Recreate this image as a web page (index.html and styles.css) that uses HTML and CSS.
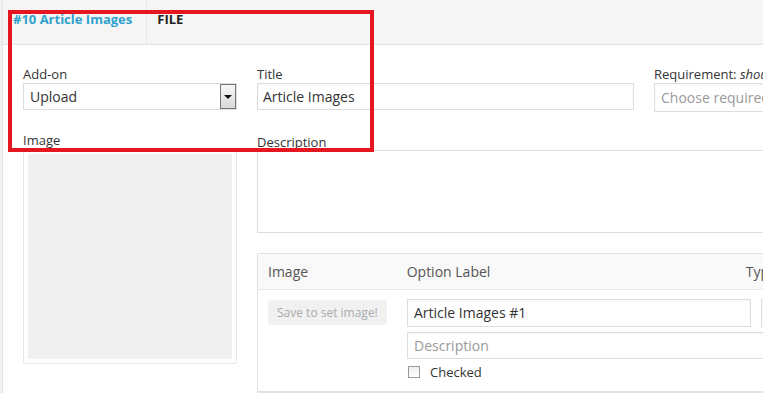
FILE: index.html
```html
<!DOCTYPE html>
<html>
<head>
<meta charset="utf-8">
<link rel="stylesheet" href="styles.css">
</head>
<body>
<div class="panel">
  <div class="tabs">
    <div class="tab tab-active">#10 Article Images</div>
    <div class="tab">FILE</div>
  </div>
  <div class="content">
    <div class="row-top">
      <div class="field f-addon">
        <div class="label">Add-on</div>
        <div class="select">
          <span class="select-text">Upload</span>
          <span class="select-btn"><span class="tri"></span></span>
        </div>
      </div>
      <div class="field f-title">
        <div class="label">Title</div>
        <div class="input">Article Images</div>
      </div>
      <div class="field f-req">
        <div class="label">Requirement: <em>should</em></div>
        <div class="input input-req placeholder">Choose required</div>
      </div>
    </div>
    <div class="row-main">
      <div class="col-left">
        <div class="label label2">Image</div>
        <div class="imgbox"><div class="imgbox-inner"></div></div>
      </div>
      <div class="col-right">
        <div class="label label3">Description</div>
        <div class="textarea"></div>
        <div class="opts">
          <div class="opts-head">
            <div class="c1">Image</div>
            <div class="c2">Option Label</div>
            <div class="c3">Type</div>
          </div>
          <div class="opts-row">
            <div class="c1"><span class="btn">Save to set image!</span></div>
            <div class="c2">
              <div class="line">
                <div class="input opt-input">Article Images #1</div>
                <div class="input opt-type"></div>
              </div>
              <div class="input opt-desc placeholder">Description</div>
              <label class="check"><span class="box"></span>Checked</label>
            </div>
          </div>
        </div>
      </div>
    </div>
  </div>
</div>
<div class="annot"></div>
</body>
</html>
```
FILE: styles.css
```css
html, body {
  margin: 0;
  padding: 0;
  background: #f1f1f1;
  overflow: hidden;
}
body {
  font-family: "Open Sans", "DejaVu Sans", sans-serif;
  font-size: 13px;
  color: #333;
  width: 763px;
  height: 393px;
  position: relative;
}
.panel {
  margin-left: 2px;
  border-left: 1px solid #e2e2e2;
  background: #fff;
  height: 393px;
  overflow: hidden;
}
.tabs {
  display: flex;
  height: 44px;
  background: #f5f5f5;
  border-bottom: 1px solid #e4e4e4;
}
.tab {
  font-weight: 700;
  font-size: 13px;
  line-height: 18px;
  padding: 10px 10px 0 10px;
  color: #222;
}
.tab-active {
  color: #2ea2cc;
  border-right: 1px solid #e8e8e8;
  padding-right: 14px;
}
.content {
  padding: 20px 0 0 20px;
}
.row-top {
  display: flex;
  gap: 20px;
}
.label {
  line-height: 18px;
  color: #333;
  white-space: nowrap;
}
.label em { font-style: italic; }
.f-addon { width: 214px; flex: none; }
.f-title { width: 377px; flex: none; }
.f-req { flex: none; width: 200px; }
.select {
  display: flex;
  align-items: center;
  height: 27px;
  box-sizing: border-box;
  border: 1px solid #ddd;
  position: relative;
}
.select-text {
  flex: 1;
  padding-left: 6px;
  font-size: 14px;
  color: #333;
}
.select-btn {
  width: 16px;
  height: 25px;
  box-sizing: border-box;
  border: 1px solid #777;
  background: linear-gradient(#f8f8f8, #d8d8d8);
  display: flex;
  align-items: center;
  justify-content: center;
}
.tri {
  width: 0;
  height: 0;
  border-left: 4px solid transparent;
  border-right: 4px solid transparent;
  border-top: 4px solid #111;
}
.input {
  height: 27px;
  box-sizing: border-box;
  border: 1px solid #ddd;
  box-shadow: inset 0 1px 2px rgba(0,0,0,0.04);
  font-size: 14px;
  line-height: 25px;
  padding-left: 5px;
  color: #333;
  white-space: nowrap;
  overflow: hidden;
}
.input-req { height: 29px; line-height: 27px; padding-left: 6px; }
.placeholder { color: #9a9a9a; }
.row-main {
  display: flex;
  gap: 20px;
  margin-top: 20px;
}
.col-left { width: 214px; flex: none; }
.label2 { line-height: 16px; }
.imgbox {
  width: 214px;
  height: 216px;
  box-sizing: border-box;
  border: 1px solid #e6e6e6;
  border-radius: 2px;
  padding: 5px 4px 4px 4px;
}
.imgbox-inner {
  background: #f0f0f0;
  height: 100%;
}
.col-right { flex: none; width: 520px; margin-top: 2px; }
.label3 { line-height: 16px; }
.textarea {
  height: 83px;
  box-sizing: border-box;
  border: 1px solid #ddd;
}
.opts {
  margin-top: 20px;
  border: 1px solid #e1e1e1;
  border-right: none;
}
.opts-head {
  display: flex;
  height: 35px;
  align-items: center;
  background: #f9f9f9;
  border-bottom: 1px solid #e8e8e8;
  color: #555;
  font-size: 14px;
}
.opts-head .c1 { width: 149px; padding-left: 10px; box-sizing: border-box; }
.opts-head .c2 { width: 340px; }
.opts-head .c3 { flex: 1; }
.opts-row {
  display: flex;
  height: 102px;
  box-sizing: border-box;
  padding-top: 9px;
  border-bottom: 1px solid #e1e1e1;
}
.opts-row .c1 { width: 149px; padding-left: 10px; box-sizing: border-box; padding-top: 1px; }
.btn {
  display: inline-block;
  background: #f1f1f1;
  color: #aaa;
  font-size: 12px;
  line-height: 25px;
  height: 25px;
  padding: 0 9px;
  border-radius: 3px;
}
.opts-row .c2 { flex: 1; }
.line { display: flex; gap: 10px; }
.opt-input { width: 344px; height: 28px; line-height: 26px; padding-left: 6px; flex: none; }
.opt-type { flex: 1; height: 28px; }
.opt-desc { margin-top: 5px; height: 27px; padding-left: 6px; }
.check {
  display: flex;
  align-items: center;
  margin-top: 5px;
  font-size: 13px;
  color: #333;
  line-height: 16px;
}
.box {
  width: 12px;
  height: 12px;
  box-sizing: border-box;
  border: 1px solid #9a9a9a;
  background: linear-gradient(#eee, #fff);
  margin: 0 10px 0 1px;
}
.annot {
  position: absolute;
  left: 8px;
  top: 10px;
  width: 366px;
  height: 142px;
  box-sizing: border-box;
  border: 4px solid #e4161f;
  pointer-events: none;
}
```
